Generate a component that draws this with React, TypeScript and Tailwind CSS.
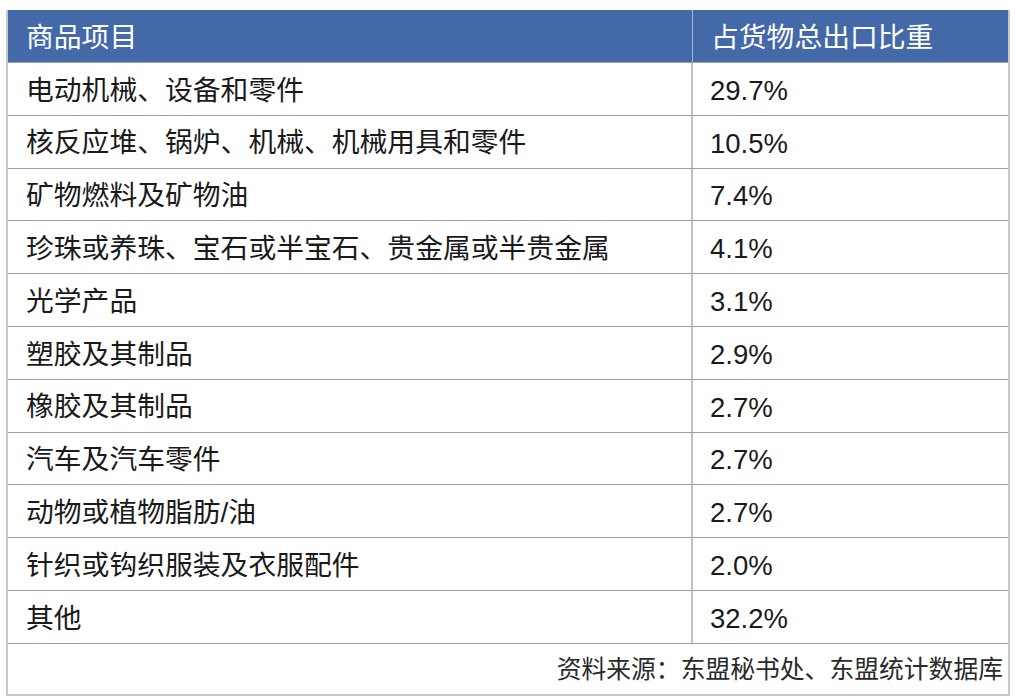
import React from 'react';

const rows: [string, string][] = [
  ['电动机械、设备和零件', '29.7%'],
  ['核反应堆、锅炉、机械、机械用具和零件', '10.5%'],
  ['矿物燃料及矿物油', '7.4%'],
  ['珍珠或养珠、宝石或半宝石、贵金属或半贵金属', '4.1%'],
  ['光学产品', '3.1%'],
  ['塑胶及其制品', '2.9%'],
  ['橡胶及其制品', '2.7%'],
  ['汽车及汽车零件', '2.7%'],
  ['动物或植物脂肪/油', '2.7%'],
  ['针织或钩织服装及衣服配件', '2.0%'],
  ['其他', '32.2%'],
];

export default function App() {
  return (
    <div
      className="min-h-screen bg-white pt-[10px] pl-[6px]"
      style={{ fontFamily: '"Liberation Sans", "Noto Sans CJK SC", sans-serif' }}
    >
      <div className="w-[1004px] border-x-2 border-b-2 border-[#c6c6c6]">
        {/* header */}
        <div className="flex h-[52px] bg-[#4469a9] text-white text-[27.8px]">
          <div className="w-[685px] shrink-0 border-r border-[#aab6cc] flex items-center pl-[18px] pt-[3px]">
            商品项目
          </div>
          <div className="flex-1 flex items-center pl-[18px] pt-[3px]">占货物总出口比重</div>
        </div>

        {rows.map(([name, pct]) => (
          <div key={name} className="flex h-[52.8px] border-t border-[#9e9e9e] text-[27.8px] text-[#1a1a1a]">
            <div className="w-[685px] shrink-0 border-r-2 border-[#c2c2c2] flex items-center pl-[18px] pt-[3px]">
              {name}
            </div>
            <div className="flex-1 flex items-center pl-[17px] pt-[3px] text-[27.5px]">{pct}</div>
          </div>
        ))}

        {/* source */}
        <div className="flex h-[51px] border-t border-[#9e9e9e] items-center justify-end pr-[5px] pt-[2px] text-[24.8px] text-[#2a2a2a]">
          资料来源：东盟秘书处、东盟统计数据库
        </div>
      </div>
    </div>
  );
}
